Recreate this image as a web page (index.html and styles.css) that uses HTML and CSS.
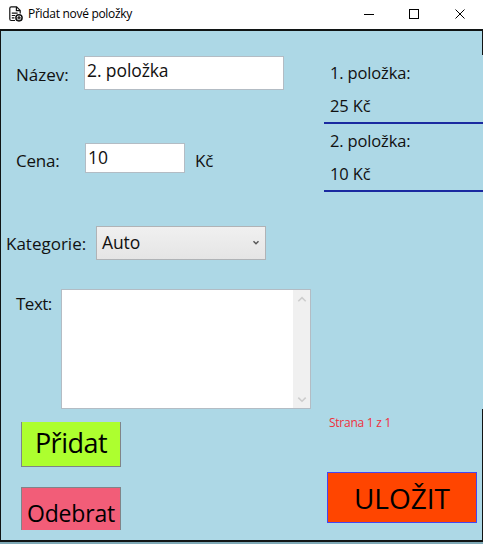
FILE: index.html
```html
<!DOCTYPE html>
<html lang="cs">
<head>
<meta charset="utf-8">
<title>Přidat nové položky</title>
<link rel="stylesheet" href="styles.css">
</head>
<body>
<div class="window">
  <header class="titlebar">
    <svg class="app-icon" width="14" height="16" viewBox="0 0 14 16" fill="none" stroke="#111" stroke-width="1.2">
      <path d="M6 14.5H2.2Q.8 14.5.8 13V2.2Q.8.8 2.2.8H7.6L11.2 4.4V7.5M7.4 1V4.6H11M2.8 7.2H8.6M2.8 9.5H6.2M2.8 11.8H5.4"/>
      <circle cx="10" cy="11.8" r="3.1" stroke-width="1.5"/>
      <path d="M10 10.1V13.5M8.3 11.8H11.7"/>
    </svg>
    <span class="title">Přidat nové položky</span>
    <svg class="controls" width="102" height="12" viewBox="0 0 102 12" fill="none" stroke="#000" shape-rendering="crispEdges">
      <path d="M0 6.500H10M45.500 1.500H54.500V10.500H45.500Z"/>
      <path d="M91.500 1.500L100.500 10.500M100.500 1.500L91.500 10.500" shape-rendering="auto"/>
    </svg>
  </header>
  <main class="panel">
    <section class="form">
      <div class="row name-row"><span class="label">Název:</span><div class="input"><span class="value">2. položka</span></div></div>
      <div class="row price-row"><span class="label">Cena:</span><div class="input"><span class="value">10</span></div><span class="label unit">Kč</span></div>
      <div class="row category-row"><span class="label">Kategorie:</span>
        <div class="select"><span class="value">Auto</span>
          <svg width="8" height="6" viewBox="0 0 8 6" fill="none" stroke="#555" stroke-width="1.4"><path d="M1.500 1.200L4 3.800L6.500 1.200"/></svg>
        </div>
      </div>
      <div class="row text-row"><span class="label">Text:</span>
        <div class="textarea"><div class="scrollbar">
          <svg width="10" height="7" viewBox="0 0 10 7" fill="none" stroke="#cdcdcd" stroke-width="1.6"><path d="M1.300 5.200L5 1.600L8.700 5.200"/></svg>
          <svg width="10" height="7" viewBox="0 0 10 7" fill="none" stroke="#cdcdcd" stroke-width="1.6"><path d="M1.300 1.600L5 5.200L8.700 1.600"/></svg>
        </div></div>
      </div>
      <div class="button add"><span>Přidat</span></div>
      <div class="button remove"><span>Odebrat</span></div>
    </section>
    <aside class="summary">
      <div class="items">
        <div class="item"><span class="item-name">1. položka:</span><span class="item-price">25 Kč</span></div>
        <div class="item"><span class="item-name">2. položka:</span><span class="item-price">10 Kč</span></div>
      </div>
      <div class="footer">
        <span class="page">Strana 1 z 1</span>
        <div class="save"><span>ULOŽIT</span></div>
      </div>
    </aside>
  </main>
</div>
</body>
</html>
```
FILE: styles.css
```css
* { box-sizing: border-box; }
body { margin: 0; font-family: "Open Sans", "Noto Sans", sans-serif; color: #111; }
.window { width: 483px; height: 544px; overflow: hidden; background: #7fa9b6; }
.titlebar { height: 29px; background: #fff; display: flex; align-items: flex-start; padding: 6px 17px 0 9px; }
.title { font-size: 12px; line-height: 16px; letter-spacing: -0.3px; margin-left: 5px; color: #000; white-space: nowrap; }
.controls { margin: 2px 0 0 auto; }
.panel { height: 513px; display: flex; background: #add8e6; border: solid #101414; border-width: 2px 0 2px 1px; }
.form { width: 323px; flex: none; }
.row { display: flex; align-items: flex-start; white-space: nowrap; }
.label, .value { font-size: 17px; line-height: 24px; letter-spacing: 0; }
.label { margin-top: 4px; flex: none; }
.value { font-size: 17.5px; letter-spacing: -0.1px; }
.input { background: #fff; border: 1px solid #b3bcc4; display: flex; align-items: flex-start; }
.name-row { height: 86px; padding-top: 25px; }
.name-row .label { width: 69px; padding-left: 15px; margin-top: 7px; }
.name-row .input { width: 200px; height: 34px; margin-left: 14px; padding: 1px 2px; }
.price-row { height: 83px; padding-top: 26px; }
.price-row .label { width: 84px; padding-left: 15px; margin-top: 6px; letter-spacing: -0.2px; }
.price-row .input { width: 100px; height: 30px; padding: 1px 2px; }
.price-row .unit { width: auto; padding-left: 10px; }
.category-row { height: 89px; padding-top: 26px; }
.category-row .label { width: 95px; padding-left: 5px; margin-top: 6px; }
.select { width: 170px; height: 34px; background: linear-gradient(#f0f0f0, #e5e5e5); border: 1px solid #b0b3b6; display: flex; justify-content: space-between; padding: 3px 5px 0 5px; }
.select svg { margin-top: 10px; }
.text-row { height: 133px; }
.text-row .label { width: 60px; padding-left: 15px; margin-top: 3px; letter-spacing: -0.5px; }
.textarea { width: 250px; height: 120px; background: #fff; border: 1px solid #b3bcc4; display: flex; justify-content: flex-end; }
.scrollbar { width: 17px; background: #f0f0f0; display: flex; flex-direction: column; align-items: center; justify-content: space-between; padding: 6px 0 5px; }
.button { width: 100px; margin-left: 20px; display: flex; justify-content: center; color: #000; border: 1px solid #808489; }
.add { height: 45px; background: #adff2f; border-top: 0; font-size: 27px; line-height: 42px; letter-spacing: -0.5px; }
.remove { height: 43px; margin-top: 20px; background: #f25d78; border-bottom: 0; font-size: 23px; line-height: 50px; letter-spacing: -0.2px; }
.summary { flex: 1; display: flex; flex-direction: column; justify-content: space-between; background: linear-gradient(#101414, #101414) right 0 top 0 / 1px 24px no-repeat, linear-gradient(#101414, #101414) right 0 bottom 0 / 1px 131px no-repeat; }
.items { padding-top: 25px; }
.item { height: 68px; border-bottom: 2px solid #1a2aa0; padding-left: 6px; display: flex; flex-direction: column; font-size: 16.5px; line-height: 33px; letter-spacing: -0.15px; white-space: nowrap; }
.footer { padding-bottom: 17px; }
.page { display: block; margin-left: 5px; font-size: 12px; line-height: 16px; letter-spacing: -0.25px; color: #f0303c; }
.save { width: 150px; height: 51px; margin: 41px 0 0 3px; border: 1px solid #4646f0; background: #ff4500; display: flex; justify-content: center; font-size: 28px; line-height: 51px; color: #000; }
```
